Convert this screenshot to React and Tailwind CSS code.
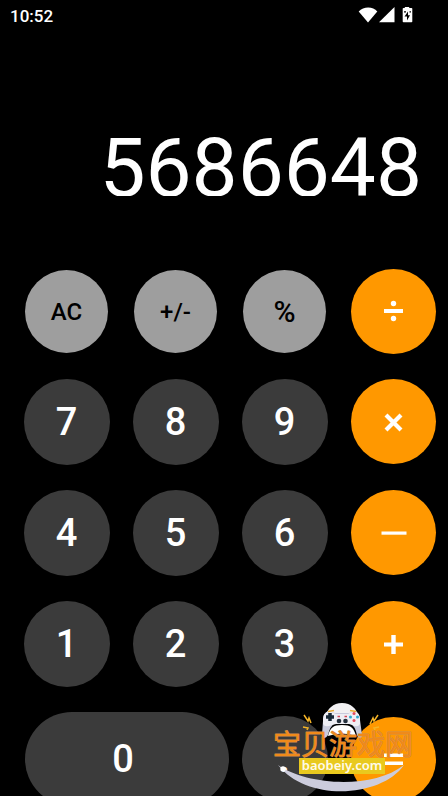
const digit =
  'flex size-[86px] items-center justify-center rounded-full bg-[#3b3b3b] text-[38px] leading-none font-medium text-white';
const tool =
  'flex size-[83px] items-center justify-center rounded-full bg-[#9e9e9e] pt-px leading-none font-medium text-black';
const operator =
  'flex size-[85px] items-center justify-center rounded-full bg-[#ff9800] text-white';

const glyphs = {
  divide: (
    <>
      <rect x="5" y="13" width="19" height="4" />
      <circle cx="14.5" cy="7.5" r="2.7" />
      <circle cx="14.5" cy="22.5" r="2.7" />
    </>
  ),
  multiply: <path d="M7 8 22 23M22 8 7 23" fill="none" stroke="currentColor" strokeWidth="4.2" />,
  subtract: <rect x="2.5" y="13.5" width="25" height="3.2" />,
  add: <path d="M5 13.500H12.300V6H16.700V13.500H24V17.500H16.700V25H12.300V17.500H5Z" />,
  equals: (
    <>
      <rect x="5" y="9.5" width="19" height="3.5" />
      <rect x="5" y="17.5" width="19" height="3.5" />
    </>
  ),
};

function Operator({ name }) {
  return (
    <button type="button" aria-label={name} className={operator}>
      <svg viewBox="0 0 30 30" className="size-[30px]" fill="currentColor" aria-hidden="true">
        {glyphs[name]}
      </svg>
    </button>
  );
}

function Row({ digits, op }) {
  return (
    <div className="grid h-[111px] shrink-0 grid-cols-4 place-items-center">
      {digits.map((d) => (
        <button key={d} type="button" className={digit}>{d}</button>
      ))}
      <Operator name={op} />
    </div>
  );
}

function StatusBar() {
  return (
    <header className="flex h-8 shrink-0 items-center justify-between pr-[34px] pl-[10px]">
      <span className="text-[17px] leading-none font-medium">10:52</span>
      <svg viewBox="0 0 56 18" className="h-[18px] w-14" fill="#fff" aria-hidden="true">
        <path d="M.7 4.600C5.500 -1 15 -1 19.300 4.600L10 15.500Z" />
        <path d="M36.500 0V15.300H21Z" />
        <path d="M46.800 1V-.5H51.200V1H53.500Q54.300 1 54.300 1.800V14.500Q54.300 15.300 53.500 15.300H45.500Q44.700 15.300 44.700 14.500V1.800Q44.700 1 45.500 1Z" />
        <path d="M50 4.500 46.500 9.500H49V13.500L52 8.300H50Z" fill="#000" />
        <path d="M46 4.200H48V5.600H46ZM51.500 4.200H53V5.600H51.500Z" fill="#000" />
      </svg>
    </header>
  );
}

function Watermark() {
  return (
    <svg
      viewBox="0 0 144 97"
      className="pointer-events-none absolute top-0 right-[34px] h-[97px] w-36"
      role="img"
      aria-label="宝贝游戏网 baobeiy.com"
    >
      <path d="M72 4C81 4 87 10 88 17H56C57 10 63 4 72 4Z" fill="#f2f1f3" />
      <path d="M58 12Q53 14 53 22L52 36C53 41 56 39 58 36Q60 27 65 24H80Q85 27 87 36C89 41 92 39 92 36L90 21Q90 14 85 12L79 14H65Z" fill="#c9cbdc" />
      <path d="M59 12Q53 14 53 20V25Q55 29 62 26L66 25H79L82 26Q88 29 90 25V20Q90 14 84 12L78 15H66Z" fill="#eeeef4" />
      <path d="M58 37C60 29 63 26 72 26S84 29 86 37Q72 32 58 37Z" fill="#fff" />
      <path d="M58 12.500 64 11.500M80 11.500 86 12.500" stroke="#e9ad35" strokeWidth="1.500" />
      <path d="M60 14V22M56 18H64" stroke="#182936" strokeWidth="3.500" />
      <g fill="#e84b5d"><circle cx="84" cy="14.500" r="1.500" /><circle cx="84" cy="21.500" r="1.500" /></g>
      <g fill="#30a9cd"><circle cx="80.500" cy="18" r="1.500" /><circle cx="87.500" cy="18" r="1.500" /></g>
      <g fill="#25303d"><circle cx="69" cy="22" r="2.300" /><circle cx="75.500" cy="22" r="2.300" /></g>
      <path d="M67.500 17.500H70M74.500 17.500H77" stroke="#d54757" strokeWidth="1.500" />
      <path d="M34 16 38 22 39 19 41 24M33 28 38 29 37 31M108 16 104 22 103 19 100 25M109 28 104 29 105 31" fill="none" stroke="#f5b528" strokeWidth="1.500" />
      <path d="M8 66C36 86 102 91 134 66C112 98 38 104 8 66Z" fill="#ccccdc" />
      <circle cx="13" cy="70" r="2.700" fill="#fff" />
      <rect x="29" y="59" width="86" height="16" fill="#e9c91e" />
      <text
        x="3"
        y="56"
        fill="#f08a1a"
        stroke="#d18d4c"
        strokeWidth="1"
        strokeLinejoin="round"
        paintOrder="stroke"
        fontFamily="'Noto Sans CJK SC', sans-serif"
        fontSize="28"
      >
        宝贝游戏网
      </text>
      <text x="72" y="71" textAnchor="middle" fill="#fffbea" fontFamily="'Noto Sans', sans-serif" fontSize="13" fontWeight="600">
        baobeiy.com
      </text>
    </svg>
  );
}

export default function App() {
  return (
    <div className="flex h-screen flex-col overflow-hidden bg-black font-['Roboto',sans-serif] text-white">
      <StatusBar />
      <div className="flex h-[164px] shrink-0 items-end justify-end overflow-hidden pr-[26px]">
        <output className="-mb-2.5 text-[82px] leading-[76px]">5686648</output>
      </div>
      <main className="flex flex-col pt-[60px] pl-3">
        <div className="grid h-[110px] shrink-0 grid-cols-4 place-items-center">
          <button type="button" className={`${tool} text-2xl`}>AC</button>
          <button type="button" className={`${tool} text-2xl`}>+/-</button>
          <button type="button" className={`${tool} text-[30px]`}>%</button>
          <Operator name="divide" />
        </div>
        <Row digits={[7, 8, 9]} op="multiply" />
        <Row digits={[4, 5, 6]} op="subtract" />
        <Row digits={[1, 2, 3]} op="add" />
        <div className="relative grid h-[120px] shrink-0 grid-cols-4 place-items-center">
          <button
            type="button"
            className="col-span-2 mr-px flex h-[94px] w-[204px] items-center justify-center justify-self-end rounded-full bg-[#3b3b3b] pr-2 text-[38px] leading-none font-medium"
          >
            0
          </button>
          <button type="button" className={digit}>.</button>
          <Operator name="equals" />
          <Watermark />
        </div>
      </main>
    </div>
  );
}
